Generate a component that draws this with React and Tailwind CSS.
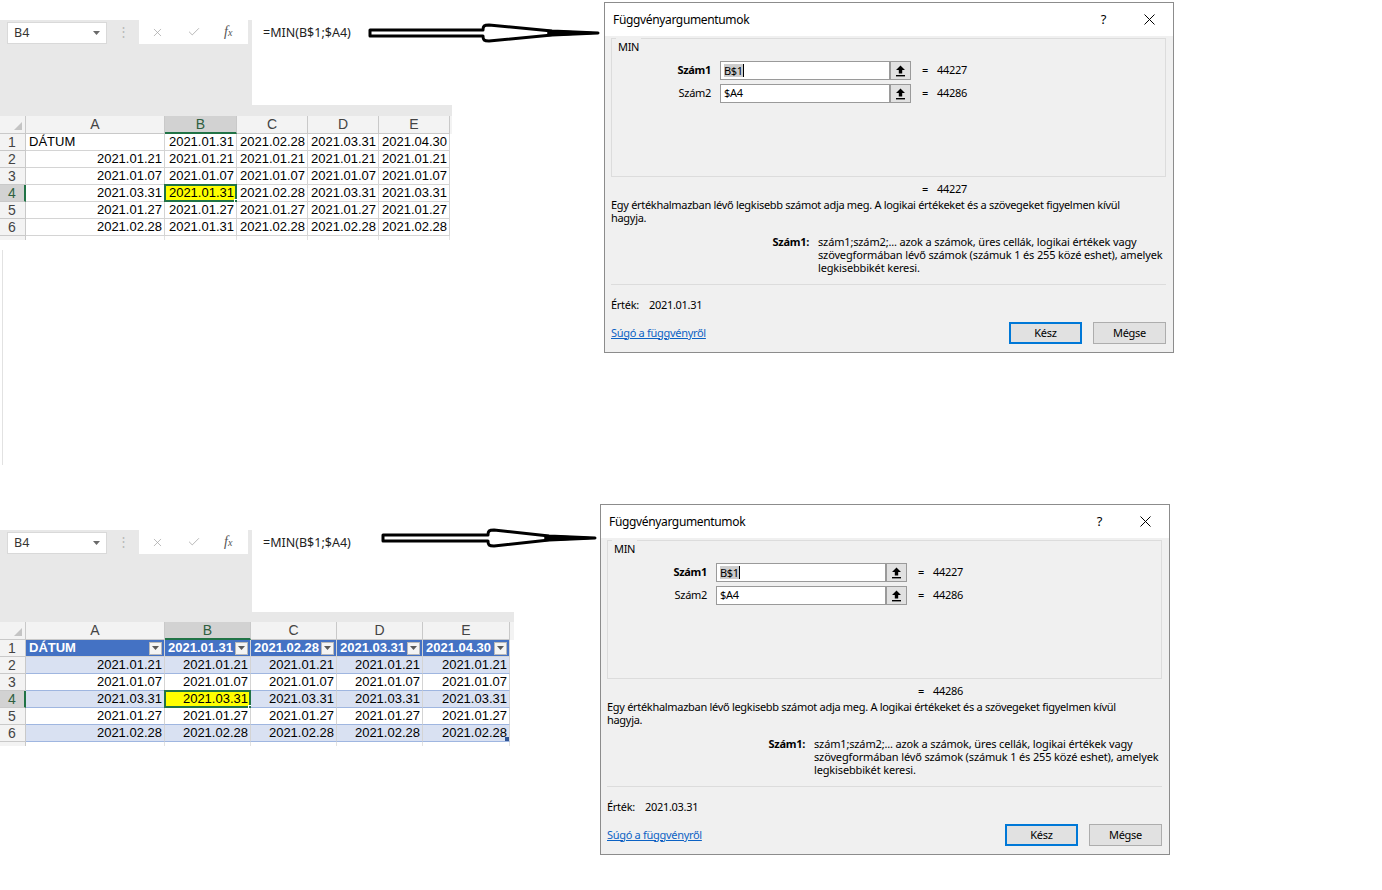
import { X, Check } from 'lucide-react';

const DLG = "font-['Noto_Sans',sans-serif]";
const XL = "font-['Liberation_Sans',Arial,sans-serif]";

const topCols = [
  { l: 'A', w: 'w-[139px]' },
  { l: 'B', w: 'w-[72px]' },
  { l: 'C', w: 'w-[71px]' },
  { l: 'D', w: 'w-[71px]' },
  { l: 'E', w: 'w-[71px]' },
];

const bottomCols = [
  { l: 'A', w: 'w-[139px]' },
  { l: 'B', w: 'w-[86px]' },
  { l: 'C', w: 'w-[86px]' },
  { l: 'D', w: 'w-[86px]' },
  { l: 'E', w: 'w-[87px]' },
];

const head = ['DÁTUM', '2021.01.31', '2021.02.28', '2021.03.31', '2021.04.30'];
const same = (v) => [v, v, v, v, v];

const topRows = [
  head,
  same('2021.01.21'),
  same('2021.01.07'),
  ['2021.03.31', '2021.01.31', '2021.02.28', '2021.03.31', '2021.03.31'],
  same('2021.01.27'),
  ['2021.02.28', '2021.01.31', '2021.02.28', '2021.02.28', '2021.02.28'],
];

const bottomRows = [
  head,
  same('2021.01.21'),
  same('2021.01.07'),
  same('2021.03.31'),
  same('2021.01.27'),
  same('2021.02.28'),
];

// hand drawn hollow pointer between the sheet and the dialog
function Arrow({ className, bulge, tip }) {
  const w = tip + 4;
  const m = tip - 46;
  return (
    <svg className={className} width={w} height="24" viewBox={`0 0 ${w} 24`}>
      <path
        d={`M2 9 L${bulge} 9 C${bulge} 5 ${bulge + 1} 4 ${bulge + 6} 4 L${m} 10 L${tip} 12 L${m} 14 L${bulge + 6} 20 C${bulge + 1} 20 ${bulge} 19 ${bulge} 15 L2 15 Z`}
        fill="white"
        stroke="black"
        strokeWidth="3"
        strokeLinejoin="round"
      />
      <path d={`M${m - 4} 9.6 L${tip} 12 L${m - 4} 14.4 Z`} fill="black" stroke="black" strokeWidth="1.5" strokeLinejoin="round" />
    </svg>
  );
}

function FilterButton() {
  return (
    <span className="w-[13px] h-[13px] bg-[#f4f4f4] border border-[#b9b9b9] flex items-center justify-center shrink-0">
      <svg width="7" height="4" viewBox="0 0 7 4">
        <path d="M0 0 H7 L3.5 4 Z" fill="#595959" />
      </svg>
    </span>
  );
}

function Sheet({ width, panelH, fxW, fxH, cols, rows, table }) {
  return (
    <div className={`${width} ${XL}`}>
      <div className={`bg-[#e8e8e8] ${panelH} flex items-start`}>
        <div className={`ml-[7px] mt-[2px] w-[100px] h-[22px] bg-white border border-[#d9d9d9] flex items-center pl-[6px] pr-[6px] text-[12.5px] text-[#333] ${DLG}`}>
          B4
          <svg className="ml-auto" width="7" height="4" viewBox="0 0 7 4">
            <path d="M0 0 H7 L3.5 4 Z" fill="#6a6a6a" />
          </svg>
        </div>
        <div className="w-[32px] h-[24px] flex items-center justify-center text-[13px] text-[#b8b8b8]">⋮</div>
        <div className="w-[109px] h-[24px] bg-white flex items-center">
          <X className="ml-[12px]" size={13} strokeWidth={1.4} color="#a8a8a8" />
          <Check className="ml-[23px]" size={14} strokeWidth={1.4} color="#a8a8a8" />
          <span className="ml-[23px] font-['Liberation_Serif',serif] italic text-[14px] text-[#555] leading-none">
            f<span className="text-[10px]">x</span>
          </span>
        </div>
        <div className={`ml-[4px] ${fxW} ${fxH} bg-white pl-[11px] pt-[6px] text-[12.5px] leading-[14px] text-[#222] ${DLG}`}>
          =MIN(B$1;$A4)
        </div>
      </div>

      <div className="flex h-[18px] bg-[#f3f3f3] text-[14px] text-[#444]">
        <div className="w-[26px] border-r border-b border-[#c9c9c9] flex items-end justify-end pr-[3px] pb-[3px]">
          <svg width="8" height="8" viewBox="0 0 8 8">
            <path d="M8 0 V8 H0 Z" fill="#c4c4c4" />
          </svg>
        </div>
        {cols.map((c) => (
          <div
            key={c.l}
            className={`${c.w} flex items-center justify-center border-r ${
              c.l === 'B' ? 'bg-[#d2d2d2] border-b-2 border-b-[#217346] border-r-[#c9c9c9] text-[#2f5f3f]' : 'border-b border-[#c9c9c9]'
            }`}
          >
            {c.l}
          </div>
        ))}
      </div>

      {rows.map((r, i) => {
        const band = table && i > 0 && i % 2 === 1;
        return (
          <div key={i} className="flex h-[17px] text-[13px] leading-[16px]">
            <div
              className={`w-[26px] pl-[8px] text-[14px] border-b ${
                i === 3
                  ? 'bg-[#d2d2d2] text-[#2f5f3f] border-r-2 border-r-[#217346] border-b-[#c9c9c9]'
                  : 'bg-[#f3f3f3] text-[#444] border-r border-[#c9c9c9]'
              }`}
            >
              {i + 1}
            </div>
            {r.map((v, j) => {
              const selected = i === 3 && j === 1;
              if (table && i === 0) {
                return (
                  <div
                    key={j}
                    className={`${cols[j].w} bg-[#4472c4] text-white font-bold border-r border-b border-[#d4d4d4] flex items-center pl-[3px] pr-[2px]`}
                  >
                    <span className="flex-1">{v}</span>
                    <FilterButton />
                  </div>
                );
              }
              return (
                <div
                  key={j}
                  className={`${cols[j].w} relative pl-[3px] pr-[2px] text-black border-r border-b ${
                    table ? 'border-r-[#d4d4d4] border-b-[#9fb6e0]' : 'border-[#d4d4d4]'
                  } ${i === 0 && j === 0 ? 'text-left' : 'text-right'} ${
                    selected ? 'bg-[#ffff00]' : band ? 'bg-[#d9e1f2]' : 'bg-white'
                  }`}
                >
                  {v}
                  {selected && (
                    <>
                      <span className="absolute inset-[-1px] border-2 border-[#217346]" />
                      <span className="absolute right-[-4px] bottom-[-4px] w-[6px] h-[6px] bg-[#217346] border border-white" />
                    </>
                  )}
                  {table && i === 5 && j === 4 && (
                    <span className="absolute right-0 bottom-0 w-[4px] h-[4px] bg-[#2f5597]" />
                  )}
                </div>
              );
            })}
          </div>
        );
      })}
      <div className="flex h-[4px] overflow-hidden">
        <div className="w-[26px] bg-[#f3f3f3] border-r border-[#c9c9c9]" />
        {cols.map((c) => (
          <div key={c.l} className={`${c.w} border-r border-[#e2e2e2]`} />
        ))}
      </div>
    </div>
  );
}

function RefButton() {
  return (
    <div className="w-[21px] h-[19px] bg-[#e1e1e1] border border-[#9a9a9a] flex items-center justify-center shrink-0">
      <svg width="11" height="12" viewBox="0 0 11 12">
        <path d="M5.5 0.5 L10 5 H7.2 V8.5 H3.8 V5 H1 Z" fill="black" />
        <rect x="1" y="10" width="9" height="1.4" fill="black" />
      </svg>
    </div>
  );
}

function ArgRow({ label, bold, value, focused, res }) {
  return (
    <div className="flex items-center h-[19px] mb-[4px]">
      <div className={`w-[99px] shrink-0 text-right ${bold ? 'font-bold' : ''}`}>{label}</div>
      <div className="ml-[9px] w-[170px] shrink-0 h-[19px] bg-white border border-[#9a9a9a] flex items-center pl-[3px]">
        {focused ? (
          <>
            <span className="bg-[#cdcdcd] leading-[13px]">{value}</span>
            <span className="w-px h-[13px] bg-black" />
          </>
        ) : (
          <span>{value}</span>
        )}
      </div>
      <RefButton />
      <span className="ml-[11px]">=</span>
      <span className="ml-[9px]">{res}</span>
    </div>
  );
}

function FnDialog({ result, value }) {
  return (
    <div className={`w-[570px] h-[351px] border border-[#8c8c8c] bg-[#f0f0f0] flex flex-col text-[11px] tracking-[-0.3px] text-black ${DLG}`}>
      <div className="h-[33px] bg-white flex items-center pl-[8px] shrink-0">
        <span className="text-[12px] tracking-[-0.35px]">Függvényargumentumok</span>
        <span className="ml-auto text-[13px]">?</span>
        <svg className="ml-[38px] mr-[18px]" width="11" height="11" viewBox="0 0 11 11">
          <path d="M0.5 0.5 L10.5 10.5 M10.5 0.5 L0.5 10.5" stroke="black" strokeWidth="1" />
        </svg>
      </div>
      <div className="pl-[6px] pr-[7px] pt-[2px] flex flex-col">
        <div className="relative border border-[#dcdcdc] h-[139px] pt-[22px]">
          <span className="absolute top-[-1px] left-[4px] px-[2px] bg-[#f0f0f0] leading-[18px]">MIN</span>
          <ArgRow label="Szám1" bold focused value="B$1" res="44227" />
          <ArgRow label="Szám2" value="$A4" res="44286" />
        </div>
        <div className="mt-[5px] leading-[14px] pl-[311px]">
          =<span className="ml-[9px]">{result}</span>
        </div>
        <div className="mt-[2px] leading-[13px] whitespace-nowrap">
          Egy értékhalmazban lévő legkisebb számot adja meg. A logikai értékeket és a szövegeket figyelmen kívül
          <br />
          hagyja.
        </div>
        <div className="mt-[11px] flex leading-[13px]">
          <div className="w-[198px] shrink-0 text-right font-bold">Szám1:</div>
          <div className="ml-[9px] whitespace-nowrap tracking-[-0.15px]">
            szám1;szám2;... azok a számok, üres cellák, logikai értékek vagy
            <br />
            szövegformában lévő számok (számuk 1 és 255 közé eshet), amelyek
            <br />
            legkisebbikét keresi.
          </div>
        </div>
        <div className="mt-[10px] h-px bg-[#dcdcdc]" />
        <div className="mt-[13px] leading-[14px] flex">
          <span className="w-[38px]">Érték:</span>
          <span>{value}</span>
        </div>
        <div className="mt-[10px] flex items-center">
          <span className="text-[#0b62c4] underline">Súgó a függvényről</span>
          <div className="ml-auto w-[73px] h-[22px] border-2 border-[#0078d7] bg-[#e1e1e1] flex items-center justify-center">
            Kész
          </div>
          <div className="ml-[11px] w-[73px] h-[22px] border border-[#adadad] bg-[#e1e1e1] flex items-center justify-center">
            Mégse
          </div>
        </div>
      </div>
    </div>
  );
}

export default function App() {
  return (
    <div className="relative w-[1382px] h-[890px] bg-white overflow-hidden">
      <div className="h-[502px] flex items-start pt-[2px]">
        <div className="mt-[18px]">
          <Sheet
            width="w-[452px]"
            panelH="h-[96px]"
            fxW="w-[200px]"
            fxH="h-[85px]"
            cols={topCols}
            rows={topRows}
          />
          <div className="ml-[2px] mt-[10px] h-[215px] border-l border-[#e2e2e2]" />
        </div>
        <div className="ml-[152px]">
          <FnDialog result="44227" value="2021.01.31" />
        </div>
      </div>

      <div className="flex items-start pt-[2px]">
        <div className="mt-[26px]">
          <Sheet
            width="w-[514px]"
            panelH="h-[92px]"
            fxW="w-[262px]"
            fxH="h-[82px]"
            cols={bottomCols}
            rows={bottomRows}
            table
          />
        </div>
        <div className="ml-[86px]">
          <FnDialog result="44286" value="2021.03.31" />
        </div>
      </div>

      <Arrow className="absolute left-[368px] top-[21px]" bulge={115} tip={230} />
      <Arrow className="absolute left-[381px] top-[526px]" bulge={107} tip={214} />
    </div>
  );
}
